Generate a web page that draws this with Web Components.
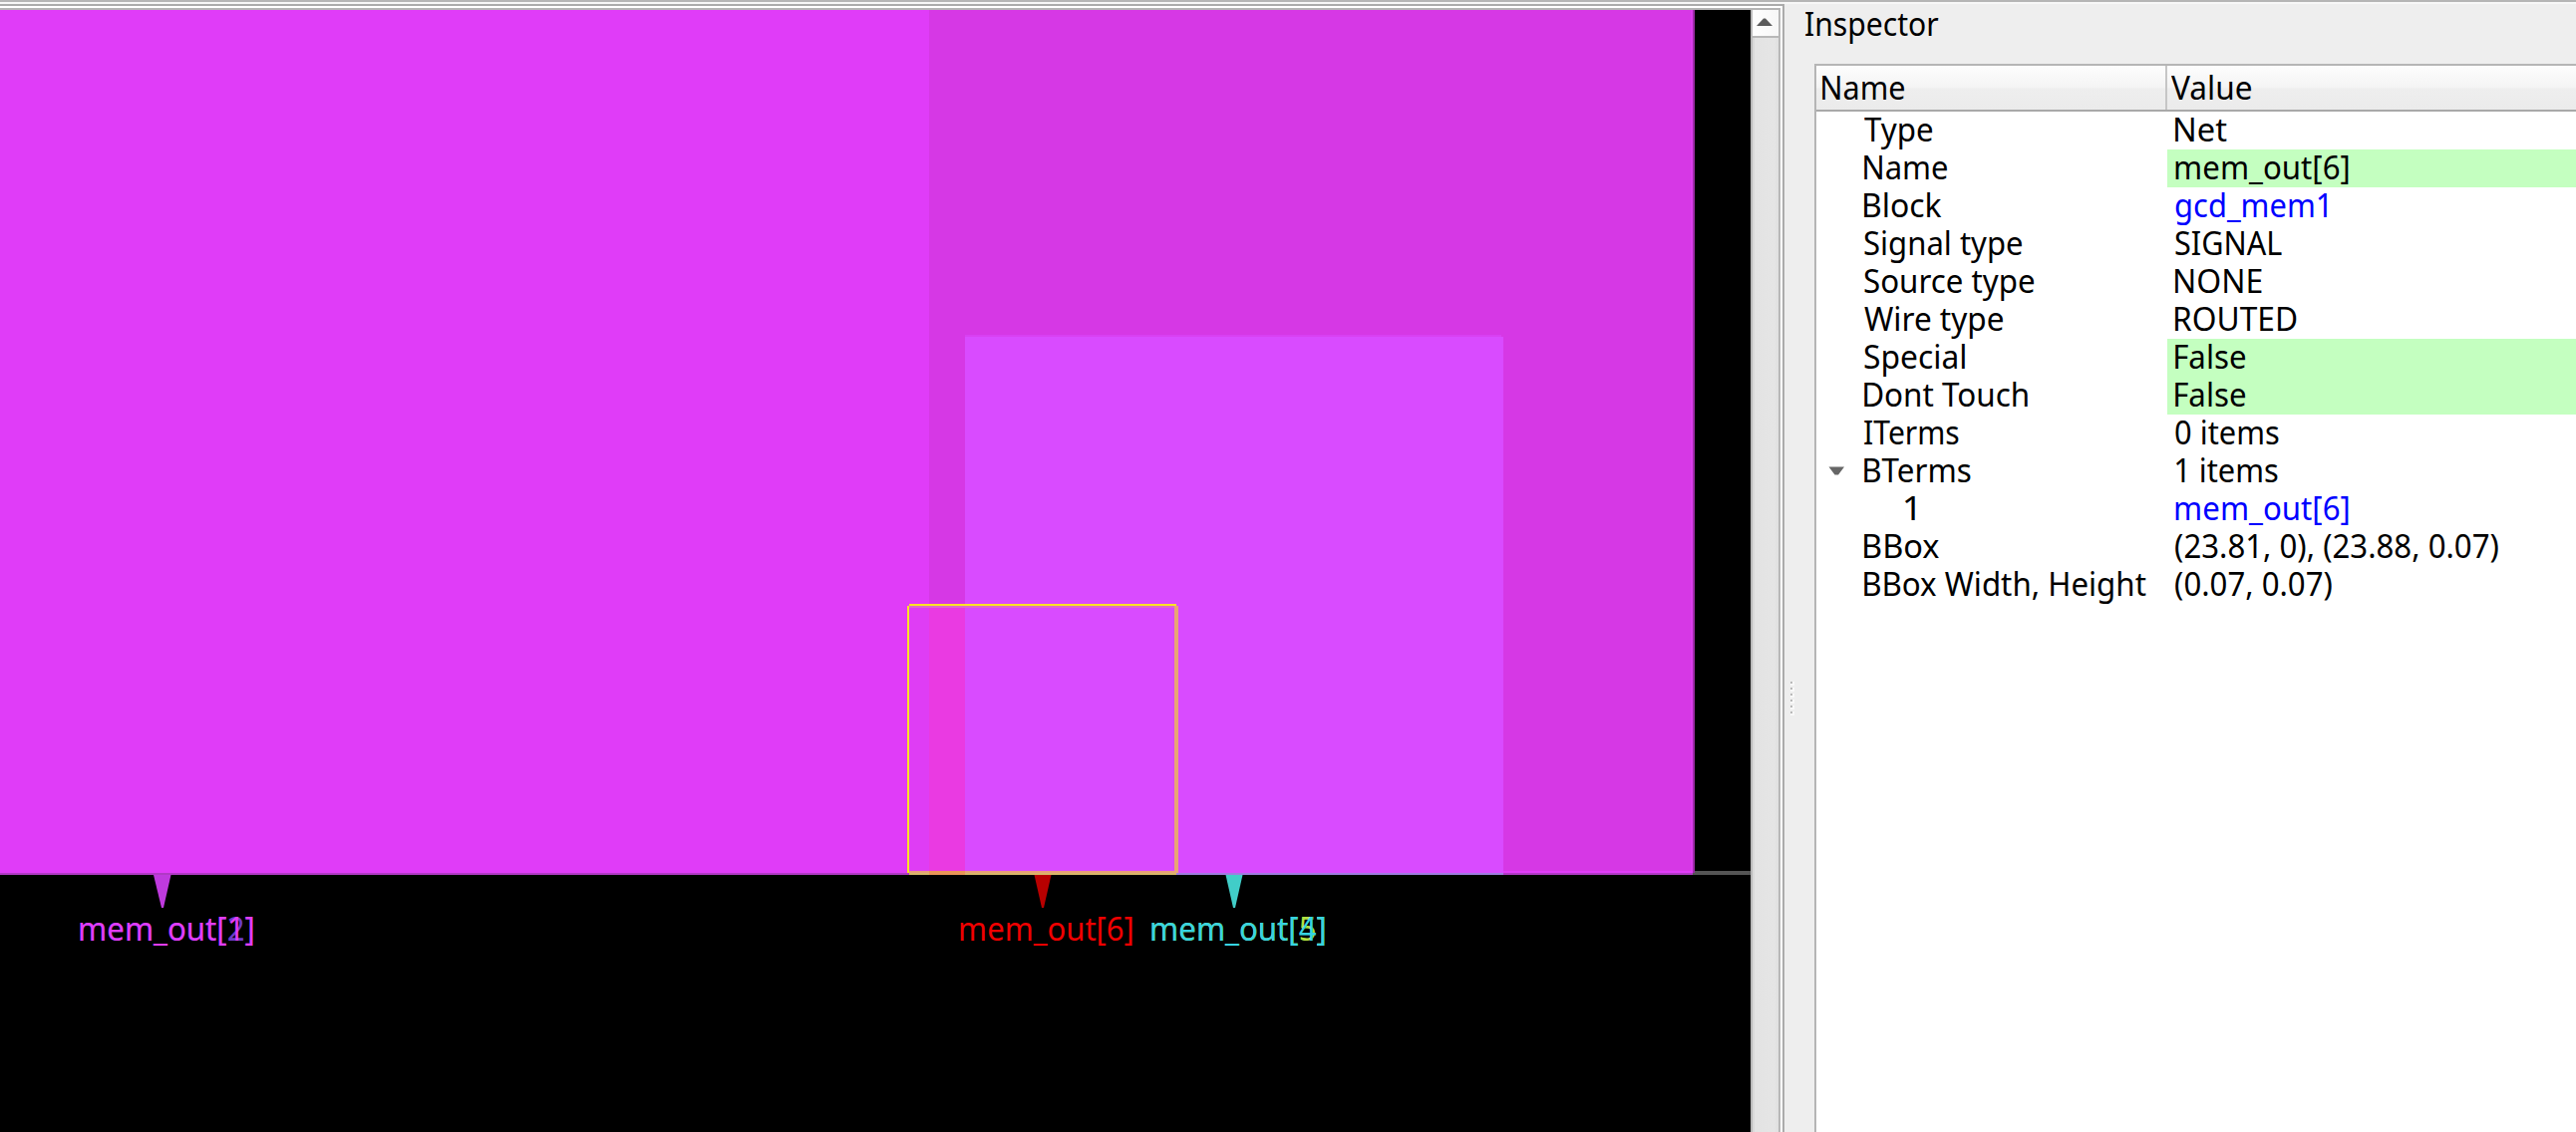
<!DOCTYPE html>
<html lang="en">
<head>
<meta charset="utf-8">
<title>Inspector</title>
<style>
html,body{margin:0;height:100%;overflow:hidden;background:#eee}
body{font:33px/38px "Noto Sans","Open Sans",sans-serif;color:#000}
</style>
</head>
<body>
<layout-app></layout-app>
<script>
const define = (name, html, init) => customElements.define(name, class extends HTMLElement {
  constructor() {
    super();
    this.attachShadow({ mode: 'open' }).innerHTML = html;
  }
  connectedCallback() { if (init) init.call(this, this.shadowRoot); }
});

/* A single-line text condensed to a given ink width. */
const pen = document.createElement('canvas').getContext('2d');
pen.font = '33px "Noto Sans","Open Sans",sans-serif';
define('fit-text', `<style>
  :host{display:block;white-space:pre;height:38px;line-height:36px}
  span{display:inline-block;transform-origin:0 0}
</style><span></span>`, function (root) {
  const span = root.querySelector('span'), text = this.getAttribute('text');
  span.textContent = text;
  const m = pen.measureText(text);
  const k = this.getAttribute('ink') / (m.actualBoundingBoxRight + m.actualBoundingBoxLeft);
  span.style.transform = `translateX(${m.actualBoundingBoxLeft * k}px) scaleX(${k})`;
});

define('pin-label', `<style>
  :host{position:absolute;top:904px;left:var(--x);color:var(--c)}
</style><slot></slot>`);

define('chip-view', `<style>
  :host{display:block;position:relative;width:1756px;height:100%;background:#000;overflow:hidden}
  svg{position:absolute;left:0;top:0}
</style>
<svg width="1756" height="1126" viewBox="0 10 1756 1126" shape-rendering="crispEdges">
  <rect x="1698" y="874" width="58" height="4" fill="#555"/>
  <rect x="0" y="10" width="1700" height="866" fill="#9d29a8"/>
  <rect x="0" y="10" width="932" height="866" fill="#e03cf8"/>
  <rect x="932" y="10" width="766" height="866" fill="#d638e5"/>
  <rect x="1696" y="10" width="2" height="866" fill="#dc3bee"/>
  <rect x="932" y="874" width="766" height="2" fill="#e13cf8"/>
  <rect x="0" y="876" width="1698" height="2" fill="#b03ac4"/>
  <rect x="968" y="336" width="538" height="2" fill="#d940f2"/>
  <rect x="968" y="338" width="540" height="538" fill="#d94bff"/>
  <rect x="968" y="876" width="540" height="2" fill="#9f7ce0"/>
  <rect x="912" y="608" width="20" height="268" fill="#df3df5"/>
  <rect x="932" y="608" width="36" height="268" fill="#ea3ae2"/>
  <rect x="912" y="608" width="266" height="2" fill="#dc6cc8"/>
  <rect x="912" y="874" width="268" height="2" fill="#e8a078"/>
  <rect x="912" y="876" width="268" height="2" fill="#d9b768"/>
  <rect x="932" y="874" width="36" height="4" fill="#e99558"/>
  <rect x="1178" y="608" width="4" height="268" fill="#e9a573"/>
  <rect x="910" y="608" width="2" height="268" fill="#fbe325"/>
  <rect x="912" y="606" width="268" height="2" fill="#fbe325"/>
  <g shape-rendering="auto">
    <path d="M154 878H171.500L164 911H162Z" fill="#bf3ade"/>
    <path d="M1037.500 878H1054.500L1047 911H1045Z" fill="#b80000"/>
    <path d="M1229.500 878H1246.500L1239 911H1237Z" fill="#41cdc8"/>
  </g>
</svg>
<pin-label style="--x:80px;--c:#6b3cc6"><fit-text text="mem_out[2]" ink="174"></fit-text></pin-label>
<pin-label style="--x:80px;--c:#e13cf8"><fit-text text="mem_out[1]" ink="174"></fit-text></pin-label>
<pin-label style="--x:963px;--c:#f00000"><fit-text text="mem_out[6]" ink="173"></fit-text></pin-label>
<pin-label style="--x:1154.500px;--c:#b0e040"><fit-text text="mem_out[5]" ink="174"></fit-text></pin-label>
<pin-label style="--x:1154.500px;--c:#35d3e2"><fit-text text="mem_out[4]" ink="174"></fit-text></pin-label>`);

define('scroll-bar', `<style>
  :host{display:flex;flex-direction:column;width:26px;border:solid #b8b8b8;border-width:0 2px}
  .up{height:26px;border-bottom:2px solid #b8b8b8;background:linear-gradient(90deg,#fff,#f7f7f7)}
  .groove{flex:1;background:linear-gradient(90deg,#d9d9d9 2px,#e3e3e3 2px,#e5e5e5 22px,#e0e0e0)}
  svg{display:block}
</style><div class="up"><svg width="26" height="26"><path d="M4 16L11 8.500H13L20 16Z" fill="#5c5c5c"/></svg></div><div class="groove"></div>`);

define('view-frame', `<style>
  :host{display:block;box-sizing:border-box;width:1790px;height:100%}
  .outer{box-sizing:border-box;height:100%;border:solid #ababab;border-width:2px 2px 0 0;padding:2px 2px 0 0;background:#fff;margin-top:2px}
  .inner{display:flex;box-sizing:border-box;height:100%;border-top:2px solid #b4b4b4}
</style><div class="outer"><div class="inner"><chip-view></chip-view><scroll-bar></scroll-bar></div></div>`);

define('split-handle', `<style>
  :host{display:flex;flex-direction:column;justify-content:flex-start;gap:2px;width:8px;padding:680px 0 0 6px;box-sizing:border-box}
  i{width:4px;height:4px;background:linear-gradient(#b8b8b8,#b8b8b8) 0 0/2px 2px no-repeat #f8f8f8}
</style><i></i><i></i><i></i><i></i><i></i><i></i>`);

define('prop-row', `<style>
  :host{display:flex;height:38px}
  .n{display:flex;box-sizing:border-box;width:352px;padding-left:12px}
  .a{width:36px}
  :host([child]) .a{width:76px}
  .v{flex:1;padding-left:7.500px}
  :host([edit]) .v{background:#c4ffc0}
  :host([link]) .v{color:#0000ff}
  svg{display:none}
  :host([open]) svg{display:block}
</style><div class="n"><div class="a"><svg width="18" height="38"><path d="M.5 14.500H16L10 22.500H6.500Z" fill="#666"/></svg></div><fit-text></fit-text></div><div class="v"><fit-text></fit-text></div>`);

define('property-tree', `<style>
  :host{display:block;flex:1;border:solid #b5b5b5;border-width:2px 0 0 2px;background:#fff}
  header{display:flex;height:44px;border-bottom:2px solid #a9a9a9;background:linear-gradient(#fdfdfd,#f4f4f4 50%,#eee 52%,#ebebeb)}
  header div{box-sizing:border-box;padding:4px 0 0 6px}
  .n{width:352px;border-right:2px solid #c6c6c6}
  header .v{padding-left:3.500px}
</style><header><div class="n"><fit-text text="Name" ink="82"></fit-text></div><div class="v"><fit-text text="Value" ink="80"></fit-text></div></header><slot></slot>`, function () {
  const rows = [
    ['Type', 68, 'Net', 52],
    ['Name', 83, 'mem_out[6]', 174, 'edit'],
    ['Block', 78, 'gcd_mem1', 152, 'link'],
    ['Signal type', 158, 'SIGNAL', 107],
    ['Source type', 170, 'NONE', 87],
    ['Wire type', 139, 'ROUTED', 122],
    ['Special', 101, 'False', 70, 'edit'],
    ['Dont Touch', 164, 'False', 70, 'edit'],
    ['ITerms', 95, '0 items', 104],
    ['BTerms', 107, '1 items', 103, 'open'],
    ['1', 11, 'mem_out[6]', 174, 'link child'],
    ['BBox', 75, '(23.81, 0), (23.88, 0.07)', 324],
    ['BBox Width, Height', 283, '(0.07, 0.07)', 157]
  ];
  for (const [name, nw, value, vw, flags] of rows) {
    const row = document.createElement('prop-row');
    for (const f of (flags || '').split(' ').filter(Boolean)) row.setAttribute(f, '');
    const [a, b] = row.shadowRoot.querySelectorAll('fit-text');
    a.setAttribute('text', name); a.setAttribute('ink', nw);
    b.setAttribute('text', value); b.setAttribute('ink', vw);
    this.append(row);
  }
});

define('inspector-dock', `<style>
  :host{display:flex;flex-direction:column;flex:1;min-width:0}
  .title{height:60px;padding:2px 0 0 13px;box-sizing:border-box}
  .body{flex:1;display:flex;padding-left:22px}
</style><div class="title"><fit-text text="Inspector" ink="134"></fit-text></div><div class="body"><property-tree></property-tree></div>`);

define('layout-app', `<style>
  :host{display:flex;box-sizing:border-box;height:100vh;width:100vw;border-top:2px solid #b5b5b5;background:linear-gradient(#f7f7f7 2px,#eee 2px)}
  .right{display:flex;flex:1;padding-top:2px}
</style><view-frame></view-frame><div class="right"><split-handle></split-handle><inspector-dock></inspector-dock></div>`);
</script>
</body>
</html>
